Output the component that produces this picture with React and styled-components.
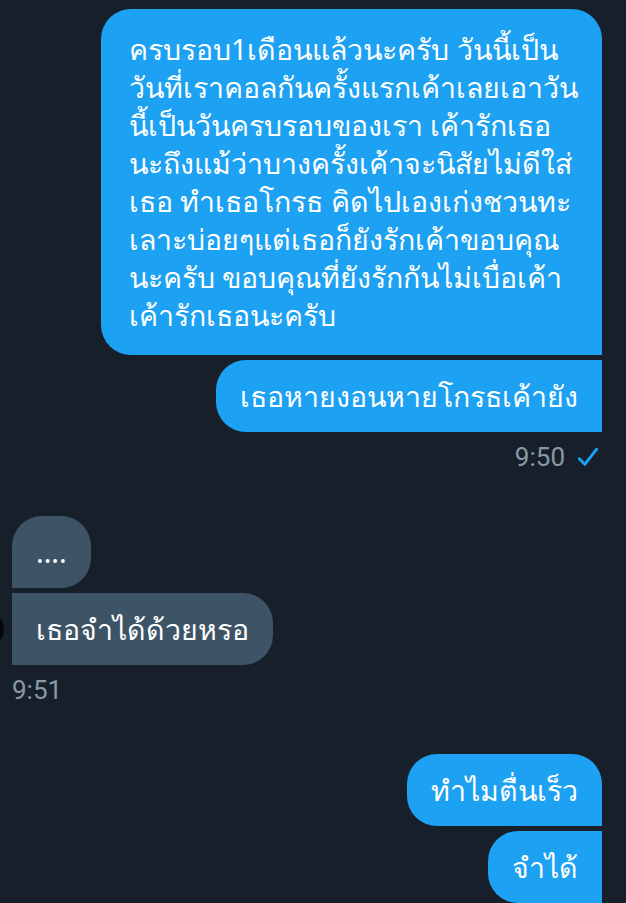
import React from "react";
import styled, { createGlobalStyle } from "styled-components";

const GlobalStyle = createGlobalStyle`
  html, body {
    margin: 0;
    padding: 0;
    background: #17202a;
  }
  * {
    box-sizing: border-box;
  }
`;

const Screen = styled.div`
  width: 626px;
  height: 903px;
  overflow: hidden;
  background: #17202a;
  font-family: "Noto Sans", Roboto, sans-serif;
  padding-top: 9px;
  position: relative;
`;

const Group = styled.div`
  display: flex;
  flex-direction: column;
  align-items: ${(p) => (p.$sent ? "flex-end" : "flex-start")};
  gap: 5px;
  padding: ${(p) => (p.$sent ? "0 24px 0 0" : "0 0 0 12px")};
  margin-top: ${(p) => p.$top || 0}px;
`;

const Bubble = styled.div`
  padding: ${(p) => (p.$tall ? "21px 24px 21px 28px" : "17px 24px")};
  font-size: 28.5px;
  line-height: 38px;
  color: #ffffff;
  white-space: pre-line;
  background: ${(p) => (p.$sent ? "#1da1f2" : "#3d5466")};
  border-radius: ${(p) => p.$radius};
`;

const Meta = styled.div`
  display: flex;
  align-items: center;
  justify-content: ${(p) => (p.$sent ? "flex-end" : "flex-start")};
  gap: 12px;
  margin-top: 12px;
  padding: ${(p) => (p.$sent ? "0 27px 0 0" : "0 0 0 12px")};
  font-family: Roboto, sans-serif;
  font-size: 26px;
  line-height: 26px;
  color: #8899a6;
`;

const Check = () => (
  <svg width="22" height="22" viewBox="0 0 24 24" fill="none">
    <path
      d="M2.5 14 L8.5 20 L21.5 3.5"
      stroke="#1da1f2"
      strokeWidth="3.2"
      strokeLinecap="round"
      strokeLinejoin="round"
    />
  </svg>
);

const AvatarEdge = styled.div`
  position: absolute;
  left: -14px;
  top: 616px;
  width: 18px;
  height: 26px;
  border-radius: 50%;
  background: #05070a;
`;

const first =
  "ครบรอบ1เดือนแล้วนะครับ วันนี้เป็น\nวันที่เราคอลกันครั้งแรกเค้าเลยเอาวัน\nนี้เป็นวันครบรอบของเรา เค้ารักเธอ\nนะถึงแม้ว่าบางครั้งเค้าจะนิสัยไม่ดีใส่\nเธอ ทำเธอโกรธ คิดไปเองเก่งชวนทะ\nเลาะบ่อยๆแต่เธอก็ยังรักเค้าขอบคุณ\nนะครับ ขอบคุณที่ยังรักกันไม่เบื่อเค้า\nเค้ารักเธอนะครับ";

export default function App() {
  return (
    <>
      <GlobalStyle />
      <Screen>
        <Group $sent>
          <Bubble $sent $tall $radius="30px 30px 0 30px">
            {first}
          </Bubble>
          <Bubble $sent $radius="30px 0 0 30px">
            เธอหายงอนหายโกรธเค้ายัง
          </Bubble>
        </Group>
        <Meta $sent>
          <span>9:50</span>
          <Check />
        </Meta>

        <Group $top={46}>
          <Bubble $radius="30px 30px 30px 0">....</Bubble>
          <Bubble $radius="0 30px 30px 0">เธอจำได้ด้วยหรอ</Bubble>
        </Group>
        <Meta>
          <span>9:51</span>
        </Meta>
        <AvatarEdge />

        <Group $sent $top={51}>
          <Bubble $sent $radius="30px 30px 0 30px">ทำไมตื่นเร็ว</Bubble>
          <Bubble $sent $radius="30px 0 0 30px">จำได้</Bubble>
        </Group>
      </Screen>
    </>
  );
}
